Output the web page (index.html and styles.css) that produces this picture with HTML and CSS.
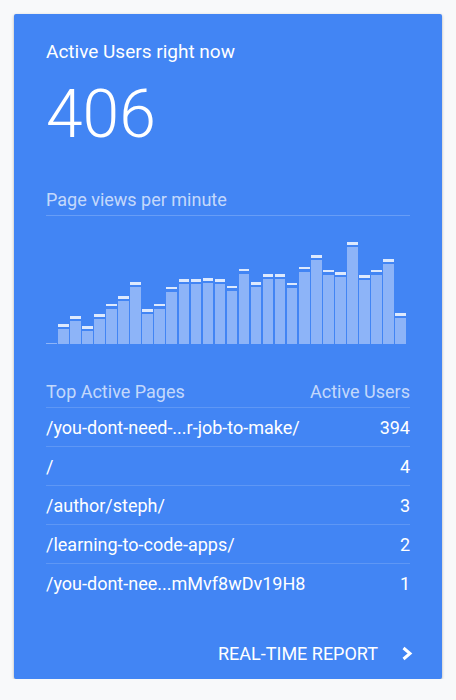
FILE: index.html
```html
<!DOCTYPE html>
<html>
	<head>
		<title>Active Users</title>
		<meta name="viewport" content="width=device-width, initial-scale=1">
		<link rel="stylesheet" href="styles.css">
	</head>
	<body>
	<div class="card">
		<div class="title">Active Users right now</div>
		<div class="count">406</div>

		<div class="chart-label">Page views per minute</div>
		<div class="chart">
			<div class="bar"><div class="body" style="height:1px"></div></div>
			<div class="bar"><div class="cap"></div><div class="body" style="height:15px"></div></div>
			<div class="bar"><div class="cap"></div><div class="body" style="height:23px"></div></div>
			<div class="bar"><div class="cap"></div><div class="body" style="height:13px"></div></div>
			<div class="bar"><div class="cap"></div><div class="body" style="height:25px"></div></div>
			<div class="bar"><div class="cap thin"></div><div class="body" style="height:35px"></div></div>
			<div class="bar"><div class="cap"></div><div class="body" style="height:43px"></div></div>
			<div class="bar"><div class="cap"></div><div class="body" style="height:57px"></div></div>
			<div class="bar"><div class="cap"></div><div class="body" style="height:30px"></div></div>
			<div class="bar"><div class="cap thin"></div><div class="body" style="height:35px"></div></div>
			<div class="bar"><div class="cap thin"></div><div class="body" style="height:52px"></div></div>
			<div class="bar"><div class="cap"></div><div class="body" style="height:60px"></div></div>
			<div class="bar"><div class="cap"></div><div class="body" style="height:60px"></div></div>
			<div class="bar"><div class="cap"></div><div class="body" style="height:61px"></div></div>
			<div class="bar"><div class="cap"></div><div class="body" style="height:60px"></div></div>
			<div class="bar"><div class="cap thin"></div><div class="body" style="height:53px"></div></div>
			<div class="bar"><div class="cap thin"></div><div class="body" style="height:70px"></div></div>
			<div class="bar"><div class="cap"></div><div class="body" style="height:57px"></div></div>
			<div class="bar"><div class="cap"></div><div class="body" style="height:65px"></div></div>
			<div class="bar"><div class="cap"></div><div class="body" style="height:65px"></div></div>
			<div class="bar"><div class="cap thin"></div><div class="body" style="height:56px"></div></div>
			<div class="bar"><div class="cap thin"></div><div class="body" style="height:72px"></div></div>
			<div class="bar"><div class="cap"></div><div class="body" style="height:84px"></div></div>
			<div class="bar"><div class="cap thin"></div><div class="body" style="height:69px"></div></div>
			<div class="bar"><div class="cap"></div><div class="body" style="height:67px"></div></div>
			<div class="bar"><div class="cap"></div><div class="body" style="height:97px"></div></div>
			<div class="bar"><div class="cap"></div><div class="body" style="height:64px"></div></div>
			<div class="bar"><div class="cap thin"></div><div class="body" style="height:69px"></div></div>
			<div class="bar"><div class="cap"></div><div class="body" style="height:80px"></div></div>
			<div class="bar"><div class="cap"></div><div class="body" style="height:26px"></div></div>
		</div>

		<div class="pages">
			<div class="row head"><span>Top Active Pages</span><span>Active Users</span></div>
			<div class="row"><span>/you-dont-need-...r-job-to-make/</span><span>394</span></div>
			<div class="row"><span>/</span><span>4</span></div>
			<div class="row"><span>/author/steph/</span><span>3</span></div>
			<div class="row"><span>/learning-to-code-apps/</span><span>2</span></div>
			<div class="row"><span>/you-dont-nee...mMvf8wDv19H8</span><span>1</span></div>
		</div>

		<div class="footer">
			<span>REAL-TIME REPORT</span>
			<svg class="chevron" width="12" height="16" viewBox="0 0 12 16"><path d="M2.5 2 L9 7.5 L2.5 13" fill="none" stroke="#fff" stroke-width="3"/></svg>
		</div>
	</div>
	</body>
</html>
```

FILE: styles.css
```css
body{
	margin:0;
	background-color:#f8f9fa;
	font-family: Roboto, "Liberation Sans", sans-serif;
	color:#fff;
}
.card{
	margin:14px 14px 0;
	padding:28px 32px 15px;
	background-color:#4285f4;
	border-radius:2px;
	box-shadow:0 1px 3px rgba(0,0,0,0.3);
	height:622px;
	display:flex;
	flex-direction:column;
}
.title{
	font-size:19px;
	line-height:20px;
}
.count{
	margin-top:20px;
	font-size:66px;
	font-weight:300;
	line-height:66px;
}
.chart-label{
	margin-top:40px;
	padding-bottom:3px;
	font-size:18px;
	line-height:24px;
	color:rgba(255,255,255,0.7);
	border-bottom:1px solid rgba(255,255,255,0.2);
}
.chart{
	height:128px;
	width:360px;
	display:flex;
	align-items:flex-end;
	gap:1.5px;
}
.bar{
	flex:1;
	display:flex;
	flex-direction:column;
}
.cap{
	height:3px;
	margin-bottom:2px;
	background:#dde9fd;
}
.cap.thin{
	height:2px;
	margin-bottom:3px;
}
.body{
	background:#8db4f8;
}
.pages{
	margin-top:31px;
	font-size:18px;
}
.row{
	display:flex;
	justify-content:space-between;
	padding-top:1px;
	line-height:37px;
	border-top:1px solid rgba(255,255,255,0.15);
}
.row.head{
	line-height:31px;
	border-top:none;
	color:rgba(255,255,255,0.7);
}
.footer{
	margin-top:auto;
	display:flex;
	justify-content:flex-end;
	align-items:center;
	gap:23px;
	font-size:18px;
	line-height:20px;
}
.chevron{
	margin-right:-3px;
}
```
